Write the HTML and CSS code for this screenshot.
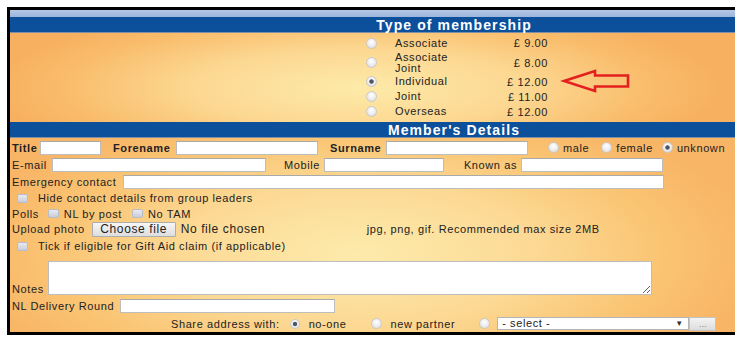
FILE: index.html
```html
<!DOCTYPE html>
<html>
<head>
<meta charset="utf-8">
<link rel="stylesheet" href="styles.css">
</head>
<body>
<div class="frame">
  <div class="strip"></div>
  <div class="bar">Type of membership</div>
  <div class="membership">
    <div class="mlist">
      <div class="mrow"><input type="radio" name="m" class="radio"><span class="mname">Associate</span><span class="price">£ 9.00</span></div>
      <div class="mrow tall"><input type="radio" name="m" class="radio"><span class="mname two">Associate<br>Joint</span><span class="price">£ 8.00</span></div>
      <div class="mrow"><input type="radio" name="m" class="radio" checked><span class="mname">Individual</span><span class="price">£ 12.00</span></div>
      <div class="mrow"><input type="radio" name="m" class="radio"><span class="mname">Joint</span><span class="price">£ 11.00</span></div>
      <div class="mrow"><input type="radio" name="m" class="radio"><span class="mname">Overseas</span><span class="price">£ 12.00</span></div>
    </div>
    <svg class="arrow" width="74" height="30" viewBox="0 0 74 30">
      <polygon points="4,14 35,4 35,8.5 68,8.5 68,19.5 35,19.5 35,24" fill="none" stroke="#e3201f" stroke-width="2.6" stroke-linejoin="miter"/>
    </svg>
  </div>
  <div class="bar">Member's Details</div>
  <div class="details">
    <div class="row r1">
      <span class="lbl b w-title">Title</span><input class="txt w61">
      <span class="lbl b w-fore">Forename</span><input class="txt w142">
      <span class="lbl b w-sur">Surname</span><input class="txt w142">
      <input type="radio" name="g" class="radio g1"><span class="glbl">male</span>
      <input type="radio" name="g" class="radio g2"><span class="glbl">female</span>
      <input type="radio" name="g" class="radio g3" checked><span class="glbl">unknown</span>
    </div>
    <div class="row r2">
      <span class="lbl w-email">E-mail</span><input class="txt w214">
      <span class="lbl right w-mob">Mobile</span><input class="txt w120">
      <span class="lbl right w-known">Known as</span><input class="txt w142">
    </div>
    <div class="row r3">
      <span class="lbl w-emerg">Emergency contact</span><input class="txt w541">
    </div>
    <div class="row r4">
      <input type="checkbox" class="chk c-first"><span class="clbl">Hide contact details from group leaders</span>
    </div>
    <div class="row r5">
      <span class="lbl">Polls</span><input type="checkbox" class="chk c-poll1"><span class="clbl2">NL by post</span><input type="checkbox" class="chk c-poll2"><span class="clbl2">No TAM</span>
    </div>
    <div class="row r6">
      <span class="lbl">Upload photo</span><button class="filebtn">Choose file</button><span class="nofile">No file chosen</span><span class="hint">jpg, png, gif. Recommended max size 2MB</span>
    </div>
    <div class="row r7">
      <input type="checkbox" class="chk c-first"><span class="clbl">Tick if eligible for Gift Aid claim (if applicable)</span>
    </div>
    <div class="row r8">
      <span class="lbl w-notes">Notes</span><textarea class="notes"></textarea>
    </div>
    <div class="row r9">
      <span class="lbl w-nl">NL Delivery Round</span><input class="txt w215">
    </div>
    <div class="row r10">
      <span class="lbl share">Share address with:</span>
      <input type="radio" name="s" class="radio s1" checked><span class="slbl">no-one</span>
      <input type="radio" name="s" class="radio s2"><span class="slbl2">new partner</span>
      <input type="radio" name="s" class="radio s3">
      <span class="selwrap"><select class="sel"><option>- select -</option></select><span class="selarrow">▼</span></span><button class="dots">...</button>
    </div>
  </div>
</div>
</body>
</html>
```
FILE: styles.css
```css
html, body {
  margin: 0;
  padding: 0;
  overflow: hidden;
  background: #fff;
}
body {
  font-family: "Liberation Sans", Arial, sans-serif;
  font-size: 11px;
  letter-spacing: 0.6px;
  color: #222;
}
.frame {
  margin: 7px 0 0 7px;
  width: 725px;
  border-top: 3px solid #000;
  border-left: 3px solid #000;
  border-bottom: 3px solid #000;
}
.strip {
  height: 7px;
  background: linear-gradient(#b5c8e6, #9db5dc);
}
.bar {
  height: 16px;
  line-height: 16px;
  padding-left: 163px;
  background: #0c4f9b;
  border-bottom: 1px solid #7f8fa8;
  box-sizing: border-box;
  color: #fff;
  font-weight: bold;
  font-size: 14px;
  letter-spacing: 1.1px;
  text-align: center;
}
.membership {
  position: relative;
  height: 89px;
  box-sizing: border-box;
  padding-top: 2px;
  background: radial-gradient(ellipse 50% 95% at 48% 62%, #fdeaa9 0%, #fcd892 45%, #f9bd6c 80%, #f7b060 100%);
}
.mlist {
  margin-left: 356px;
  width: 200px;
}
.mrow {
  display: flex;
  align-items: center;
  height: 16px;
}
.mrow.tall { height: 23px; }
.mrow:nth-child(4), .mrow:nth-child(5) { height: 15px; }
.mrow:nth-child(3) { height: 15px; }
.mname {
  width: 86px;
  margin-left: 18px;
  line-height: 11px;
}
.price {
  width: 67px;
  text-align: right;
}
.arrow {
  position: absolute;
  left: 550px;
  top: 34px;
}
.radio {
  -webkit-appearance: none;
  appearance: none;
  margin: 0;
  width: 11px;
  height: 11px;
  border-radius: 50%;
  border: 1px solid #c9c9c9;
  box-sizing: border-box;
  background: radial-gradient(circle at 50% 35%, #ffffff 0%, #ececec 55%, #d6d6d6 100%);
  flex: none;
}
.radio:checked {
  background: radial-gradient(circle at 50% 50%, #4f5562 0 1.8px, rgba(0,0,0,0) 2.6px), radial-gradient(circle at 50% 35%, #ffffff 0%, #ececec 55%, #d6d6d6 100%);
}
.chk {
  -webkit-appearance: none;
  appearance: none;
  margin: 0;
  width: 11px;
  height: 9px;
  border-radius: 2px;
  border: 1px solid #b7bcc9;
  box-sizing: border-box;
  background: linear-gradient(#e9ebf0, #c9cdd8);
  flex: none;
}
.details {
  height: 194px;
  box-sizing: border-box;
  padding-top: 1px;
  padding-left: 2px;
  background: radial-gradient(ellipse 55% 80% at 48% 60%, #fdebac 0%, #fcd994 45%, #fac574 75%, #f8b566 100%);
}
.row {
  display: flex;
  align-items: center;
  white-space: nowrap;
}
.r1, .r2, .r3 { height: 17px; }
.r4 { height: 16px; }
.r5 { height: 15px; }
.r6 { height: 16px; }
.r7 { height: 18px; }
.r8 { height: 42px; align-items: flex-end; padding-bottom: 2px; box-sizing: border-box; }
.r9 { height: 18px; }
.r10 { height: 17px; }
.lbl { flex: none; }
.b { font-weight: bold; }
.right { text-align: right; padding-right: 4px; box-sizing: border-box; }
.w-title { width: 28px; }
.w-fore { width: 75px; padding-left: 12px; box-sizing: border-box; }
.w-sur { width: 68px; padding-left: 12px; box-sizing: border-box; }
.w-email { width: 40px; }
.w-mob { width: 58px; }
.w-known { width: 77px; }
.w-emerg { width: 111px; }
.w-notes { width: 36px; line-height: 12px; }
.w-nl { width: 108px; }
.txt {
  height: 14px;
  margin: 0;
  padding: 0 2px;
  border: 1px solid #bdbdbd;
  border-top-color: #a9a9a9;
  box-sizing: border-box;
  background: #fff;
  font: inherit;
  flex: none;
}
.w61 { width: 61px; }
.w142 { width: 142px; }
.w214 { width: 214px; }
.w120 { width: 120px; }
.w541 { width: 541px; }
.w215 { width: 215px; }
.g1 { margin-left: 20px; }
.g2 { margin-left: 12px; }
.g3 { margin-left: 9px; }
.glbl { margin-left: 4px; }
.c-first { margin-left: 5px; }
.clbl { margin-left: 10px; }
.c-poll1 { margin-left: 9px; }
.c-poll2 { margin-left: 10px; }
.clbl2 { margin-left: 5px; }
.filebtn {
  margin: 0 0 0 7px;
  width: 84px;
  height: 15px;
  padding: 0;
  border: 1px solid #adadad;
  border-radius: 1px;
  background: linear-gradient(#f6f6f6, #dedede);
  font-family: "Liberation Sans", Arial, sans-serif;
  font-size: 12px;
  letter-spacing: 0.6px;
  color: #222;
  line-height: 13px;
  flex: none;
}
.nofile {
  margin-left: 5px;
  font-size: 12px;
  width: 186px;
}
.notes {
  margin: 0;
  width: 604px;
  height: 34px;
  border: 1px solid #bdbdbd;
  box-sizing: border-box;
  background: #fff;
  flex: none;
}
.share { margin-left: 159px; }
.s1 { margin-left: 10px; width: 10px; height: 10px; }
.s2 { margin-left: 25px; }
.s3 { margin-left: 24px; }
.slbl { margin-left: 9px; }
.slbl2 { margin-left: 8px; }
.selwrap {
  position: relative;
  margin-left: 7px;
  display: inline-block;
  height: 13px;
  flex: none;
}
.sel {
  -webkit-appearance: none;
  appearance: none;
  width: 192px;
  height: 13px;
  margin: 0;
  padding: 0 0 0 4px;
  border: 1px solid #b5b5b5;
  border-radius: 0;
  background: #fff;
  font-family: "Liberation Sans", Arial, sans-serif;
  font-size: 11px;
  letter-spacing: 0.6px;
  color: #222;
  line-height: 11px;
  display: block;
}
.selarrow {
  position: absolute;
  right: 6px;
  top: 2px;
  font-size: 8px;
  line-height: 9px;
  color: #333;
  letter-spacing: 0;
}
.dots {
  width: 27px;
  height: 14px;
  margin: 0;
  padding: 0;
  border: 1px solid #c4c4c4;
  background: linear-gradient(#f4f4f4, #dcdcdc);
  font-size: 9px;
  line-height: 10px;
  color: #888;
  flex: none;
}
```
